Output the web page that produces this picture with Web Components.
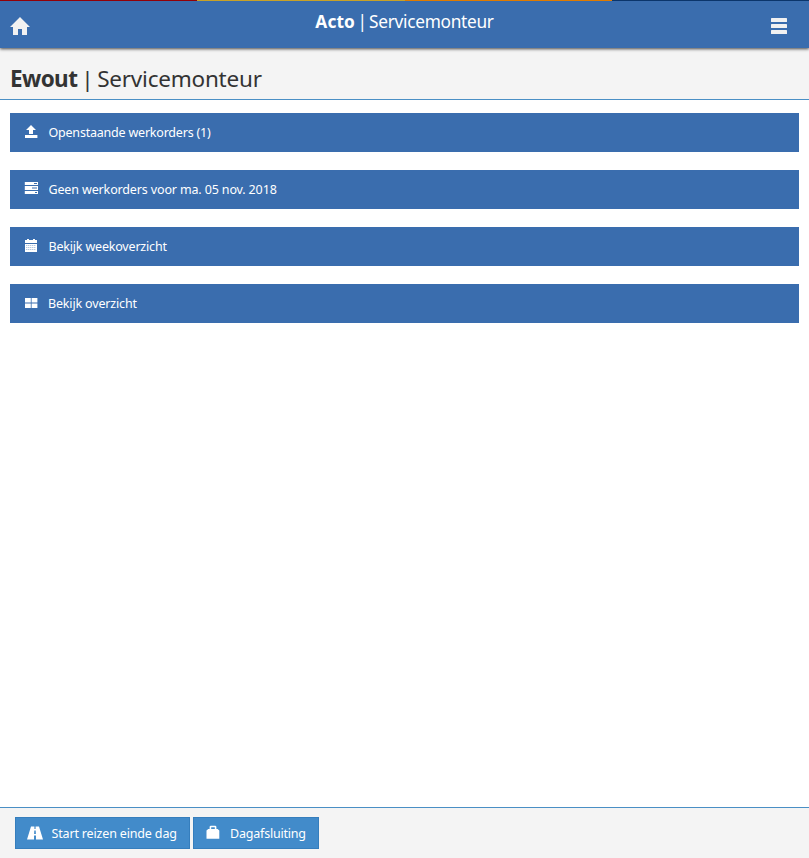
<!DOCTYPE html>
<html lang="nl">
<head>
<meta charset="utf-8">
<title>Acto | Servicemonteur</title>
<style>
html,body{margin:0;height:100%;background:#fff}
body{font-family:"Noto Sans","Open Sans",sans-serif;overflow:hidden}
</style>
</head>
<body>
<acto-app></acto-app>
<script>
const icons = {
  home: ['0 0 20 18', '<path d="M10 0 20 10H17V18H12V12H8V18H3V10H0Z"/>'],
  menu: ['0 0 16 16', '<rect width="16" height="4" rx=".6"/><rect y="6" width="16" height="4" rx=".6"/><rect y="12" width="16" height="4" rx=".6"/>'],
  upload: ['0 0 14 14', '<path d="M7 0 12 5H9V9H5V5H2ZM1 10H13.4V13H1Z"/>'],
  tasks: ['0 0 14 14', '<path fill-rule="evenodd" d="M.8 0H14V3H.8ZM10 1V2H13V1ZM.8 4H14V8H.8ZM8 5.5V6.5H13V5.5ZM.8 9H14V12H.8ZM11 10V11H13V10Z"/>'],
  calendar: ['0 0 14 14', '<path d="M1 1H3V0H5V1H9V0H11V1H13V4H1Z"/><path fill-rule="evenodd" d="M1 5H13V13H1ZM2.5 6.3V7H3.2V6.3ZM4.5 6.3V7H5.2V6.3ZM6.5 6.3V7H7.2V6.3ZM8.5 6.3V7H9.2V6.3ZM10.5 6.3V7H11.2V6.3ZM2.5 8.3V9H3.2V8.3ZM4.5 8.3V9H5.2V8.3ZM6.5 8.3V9H7.2V8.3ZM8.5 8.3V9H9.2V8.3ZM10.5 8.3V9H11.2V8.3ZM2.5 10.3V11H3.2V10.3ZM4.5 10.3V11H5.2V10.3ZM6.5 10.3V11H7.2V10.3ZM8.5 10.3V11H9.2V10.3ZM10.5 10.3V11H11.2V10.3Z"/>'],
  grid: ['0 0 14 14', '<path d="M1 2H6.8V6.6H1ZM7.6 2H13.4V6.6H7.6ZM1 7.4H6.8V12H1ZM7.6 7.4H13.4V12H7.6Z"/>'],
  road: ['0 0 16 14', '<path fill-rule="evenodd" d="M4 .5H7.4V3H8.6V.5H12L16 13.5H9V9.5H7V13.5H0ZM7.3 4.5L7.1 8H8.9L8.7 4.5Z"/>'],
  lock: ['0 0 14 14', '<path fill-rule="evenodd" d="M3.6 4V2Q3.6 .8 5 .8H9Q10.4 .8 10.4 2V4H11.6L13.3 5.6V13.8H.5V5.6L2.2 4ZM5.2 4H8.8V2.3H5.2Z"/>']
};

class ActoIcon extends HTMLElement {
  connectedCallback() {
    const [box, shape] = icons[this.getAttribute('name')];
    this.attachShadow({mode: 'open'}).innerHTML =
      `<style>:host{display:block;flex:none}svg{display:block;width:100%;height:100%;fill:currentColor}</style>
       <svg viewBox="${box}" aria-hidden="true">${shape}</svg>`;
  }
}
customElements.define('acto-icon', ActoIcon);

function define(name, markup) {
  customElements.define(name, class extends HTMLElement {
    constructor() {
      super();
      this.attachShadow({mode: 'open'}).innerHTML = markup;
    }
  });
}

define('acto-header', `<style>
:host{display:block;height:48px;background:#3a6dae;color:#f1f1f1;box-shadow:0 1px 3px #444;position:relative}
.stripe{height:1px;display:grid;grid-template-columns:197px 208px 207px 1fr}
.stripe i:nth-child(1){background:#920008}.stripe i:nth-child(2){background:#c9a227}.stripe i:nth-child(3){background:#e07b00}.stripe i:nth-child(4){background:#0b356b}
.bar{display:grid;grid-template-columns:20px 1fr 16px;padding:0 22px 0 10px;height:47px}
.home{width:20px;height:18px;margin-top:16px}.menu{width:16px;height:16px;margin-top:17px}
.title{text-align:center;color:#fff;font-size:17.3px;line-height:24px;margin:9px 0 0 8px;letter-spacing:-.3px;word-spacing:-1.7px;white-space:nowrap}
::slotted(b){letter-spacing:.1px}
</style><div class="stripe"><i></i><i></i><i></i><i></i></div>
<div class="bar"><acto-icon class="home" name="home"></acto-icon><div class="title"><slot></slot></div><acto-icon class="menu" name="menu"></acto-icon></div>`);

define('acto-heading', `<style>
:host{display:block;box-sizing:border-box;height:52px;background:#f4f4f4;border-bottom:1px solid #4a8fc5;color:#333;padding:14px 10px 0;font-size:22.5px;line-height:34px;letter-spacing:-.22px;word-spacing:-1.8px;white-space:nowrap}
</style><slot></slot>`);

define('acto-item', `<style>
:host{display:flex;box-sizing:border-box;height:39px;background:#3a6dae;color:#fff;padding:0 14px;gap:10.5px;font-size:12.5px;line-height:39px;white-space:nowrap}
</style><slot name="icon"></slot><slot></slot>`);

define('acto-button', `<style>
:host{display:flex;box-sizing:border-box;height:32px;background:#428bca;border:1px solid #357ebd;color:#fff;padding:0 11px;font-size:12.5px;line-height:31px;white-space:nowrap}
</style><slot name="icon"></slot><slot></slot>`);

define('acto-app', `<style>
:host{display:flex;flex-direction:column;height:100vh}
main{flex:1;display:flex;flex-direction:column;gap:18px;padding:13px 10px}
footer{box-sizing:border-box;height:51px;border-top:1px solid #4a8fc5;background:#f4f4f4;display:flex;gap:3px;padding:9px 15px}
acto-item acto-icon{width:14px;height:14px;margin-top:12px}
acto-heading b{letter-spacing:-.6px}
.t1{letter-spacing:-.21px}.t2{letter-spacing:-.14px}.t3{letter-spacing:-.19px}
.t4{letter-spacing:-.16px;margin-left:-.5px}.t5{letter-spacing:-.16px}.t6{letter-spacing:-.2px}
.road{width:16px;height:14px;margin:8px 8.5px 0 0}
.lock{width:14px;height:14px;margin:7px 10.5px 0 .5px}
.b1{width:175px}.b2{width:126px}
</style>
<acto-header><b>Acto</b> | Servicemonteur</acto-header>
<acto-heading><span><b>Ewout</b> | Servicemonteur</span></acto-heading>
<main>
<acto-item><acto-icon slot="icon" name="upload"></acto-icon><span class="t1">Openstaande werkorders (1)</span></acto-item>
<acto-item><acto-icon slot="icon" name="tasks"></acto-icon><span class="t2">Geen werkorders voor ma. 05 nov. 2018</span></acto-item>
<acto-item><acto-icon slot="icon" name="calendar"></acto-icon><span class="t3">Bekijk weekoverzicht</span></acto-item>
<acto-item><acto-icon slot="icon" name="grid"></acto-icon><span class="t4">Bekijk overzicht</span></acto-item>
</main>
<footer>
<acto-button class="b1"><acto-icon slot="icon" class="road" name="road"></acto-icon><span class="t5">Start reizen einde dag</span></acto-button>
<acto-button class="b2"><acto-icon slot="icon" class="lock" name="lock"></acto-icon><span class="t6">Dagafsluiting</span></acto-button>
</footer>`);
</script>
</body>
</html>
